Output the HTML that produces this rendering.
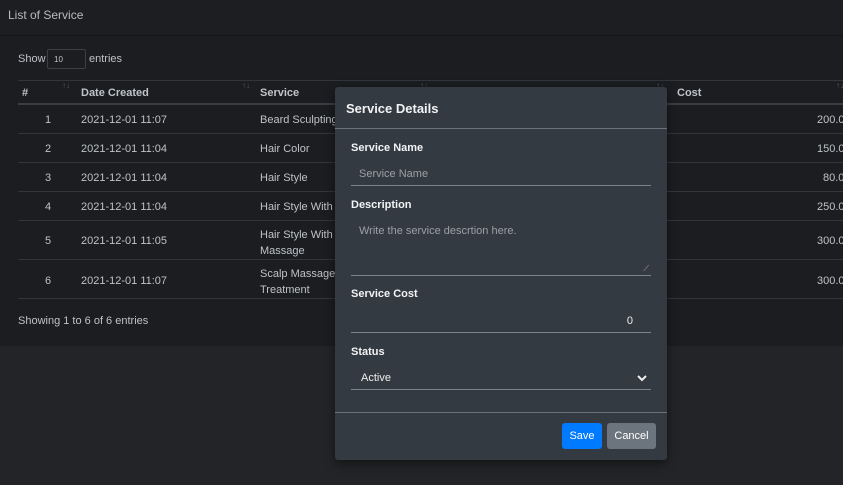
<!DOCTYPE html>
<html><head><meta charset="utf-8"><style>
*{box-sizing:border-box;margin:0;padding:0}
body{width:843px;height:485px;background:#222427;font-family:"Liberation Sans",sans-serif;color:#bfc2c6;font-size:11px;position:relative;overflow:hidden}
.hdr{position:absolute;left:0;top:0;width:843px;height:36px;background:#1c1e21;border-bottom:1px solid #15171a}
.hdr span{position:absolute;left:8px;top:8px;font-size:12px;color:#b8bbbf}
.card{position:absolute;left:0;top:36px;width:843px;height:310px;background:#1b1d20}
.abs{position:absolute;white-space:nowrap}
.line{position:absolute;left:18px;width:825px;height:1px;background:#32363b}
.th{font-weight:bold;color:#c0c3c7}
.sort{position:absolute;font-size:8px;color:#55595e}
.modal{position:absolute;left:335px;top:87px;width:332px;height:373px;background:#343a41;border-radius:3px;box-shadow:0 3px 10px rgba(0,0,0,.5)}
.modal .lbl{position:absolute;left:16px;font-weight:bold;color:#f2f3f4;font-size:11px}
.modal .in{position:absolute;left:16px;width:300px;border-bottom:1px solid #7d838a}
.ph{position:absolute;left:8px;color:#9aa0a6;font-size:11px}
</style></head><body>
<div class="hdr"><span>List of Service</span></div>
<div class="card"></div>
<div class="abs" style="left:18px;top:53px">Show</div>
<div class="abs" style="left:47px;top:49px;width:39px;height:20px;border:1px solid #3c4045;border-radius:2px;font-size:8px;padding:5px 0 0 6px">10</div>
<div class="abs" style="left:89px;top:53px">entries</div>
<div class="line" style="top:80px"></div>
<div class="line" style="top:103px;height:2px;background:#3a3e43"></div>
<div class="abs th" style="left:22px;top:87px">#</div>
<div class="abs th" style="left:81px;top:87px">Date Created</div>
<div class="abs th" style="left:260px;top:87px">Service</div>
<div class="abs th" style="left:677px;top:87px">Cost</div>
<div class="sort" style="left:62px;top:81px">↑↓</div>
<div class="sort" style="left:242px;top:81px">↑↓</div>
<div class="sort" style="left:420px;top:81px">↑↓</div>
<div class="sort" style="left:656px;top:81px">↑↓</div>
<div class="sort" style="left:836px;top:81px">↑↓</div>

<div class="abs" style="left:45px;top:114px">1</div><div class="abs" style="left:81px;top:114px">2021-12-01 11:07</div><div class="abs" style="left:260px;top:114px">Beard Sculpting</div><div class="abs" style="left:817px;top:114px">200.0</div>
<div class="line" style="top:133px"></div>
<div class="abs" style="left:45px;top:143px">2</div><div class="abs" style="left:81px;top:143px">2021-12-01 11:04</div><div class="abs" style="left:260px;top:143px">Hair Color</div><div class="abs" style="left:817px;top:143px">150.0</div>
<div class="line" style="top:162px"></div>
<div class="abs" style="left:45px;top:172px">3</div><div class="abs" style="left:81px;top:172px">2021-12-01 11:04</div><div class="abs" style="left:260px;top:172px">Hair Style</div><div class="abs" style="left:823px;top:172px">80.0</div>
<div class="line" style="top:191px"></div>
<div class="abs" style="left:45px;top:201px">4</div><div class="abs" style="left:81px;top:201px">2021-12-01 11:04</div><div class="abs" style="left:260px;top:201px">Hair Style With M</div><div class="abs" style="left:817px;top:201px">250.0</div>
<div class="line" style="top:220px"></div>
<div class="abs" style="left:45px;top:235px">5</div><div class="abs" style="left:81px;top:235px">2021-12-01 11:05</div><div class="abs" style="left:260px;top:227px;line-height:16px">Hair Style With W<br>Massage</div><div class="abs" style="left:817px;top:235px">300.0</div>
<div class="line" style="top:259px"></div>
<div class="abs" style="left:45px;top:275px">6</div><div class="abs" style="left:81px;top:275px">2021-12-01 11:07</div><div class="abs" style="left:260px;top:266px;line-height:16px">Scalp Massage &amp;<br>Treatment</div><div class="abs" style="left:817px;top:275px">300.0</div>
<div class="line" style="top:298px"></div>
<div class="abs" style="left:18px;top:315px">Showing 1 to 6 of 6 entries</div>

<div class="modal">
<div class="abs" style="left:11px;top:14px;font-size:13px;font-weight:bold;color:#f2f3f4">Service Details</div>
<div class="abs" style="left:0;top:41px;width:332px;height:1px;background:#6c737a"></div>
<div class="lbl" style="top:55px">Service Name</div>
<div class="in" style="top:76px;height:23px"><span class="ph" style="top:5px">Service Name</span></div>
<div class="lbl" style="top:112px">Description</div>
<div class="in" style="top:132px;height:57px"><span class="ph" style="top:6px">Write the service descrtion here.</span><span class="abs" style="right:2px;bottom:1px;font-size:8px;color:#aaa">⟋</span></div>
<div class="lbl" style="top:201px">Service Cost</div>
<div class="in" style="top:222px;height:24px"><span class="abs" style="right:18px;top:6px;color:#eee">0</span></div>
<div class="lbl" style="top:259px">Status</div>
<div class="in" style="top:280px;height:23px"><span class="abs" style="left:10px;top:5px;color:#eee">Active</span>
<svg class="abs" style="right:4px;top:7px" width="10" height="8" viewBox="0 0 10 8"><path d="M1 2l4 4 4-4" stroke="#eee" stroke-width="2" fill="none"/></svg></div>
<div class="abs" style="left:0;top:325px;width:332px;height:1px;background:#6c737a"></div>
<div class="abs" style="left:227px;top:336px;width:40px;height:26px;background:#007bff;border-radius:3px;color:#fff;text-align:center;line-height:26px">Save</div>
<div class="abs" style="left:272px;top:336px;width:49px;height:26px;background:#6c757d;border-radius:3px;color:#fff;text-align:center;line-height:26px">Cancel</div>
</div>
</body></html>
